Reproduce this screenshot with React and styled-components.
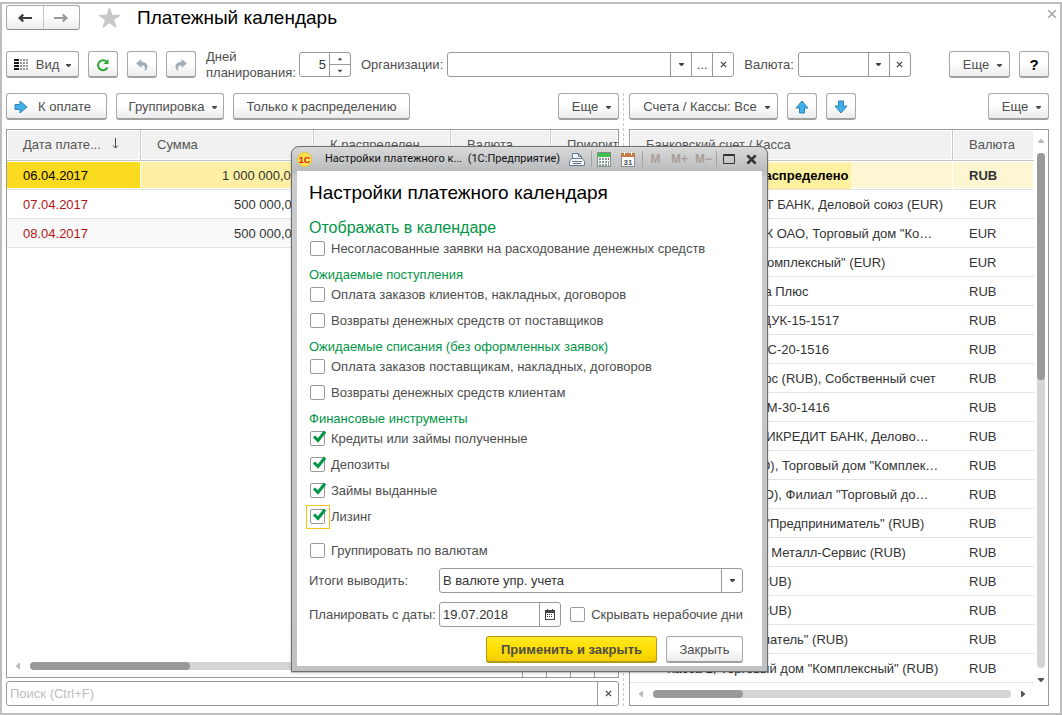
import React, { useState } from "react"
import styled, { createGlobalStyle, css } from "styled-components"
import { IoStar } from "react-icons/io5"

const GlobalStyle = createGlobalStyle`
  * { box-sizing: border-box; }
  body {
    margin: 0;
    background: #fff;
    color: #4d4d4d;
    font: 13px/16px "Liberation Sans", Arial, sans-serif;
  }
  button, input, select { font: inherit; color: inherit; }
`

const Page = styled.div`
  padding-top: 2px;
  min-height: 100vh;
  display: flex;
`

const Frame = styled.main`
  position: relative;
  flex: 1;
  min-width: 0;
  display: flex;
  flex-direction: column;
  padding: 1px 11px 7px 4px;
  border: 2px solid #bebebe;
`

const Header = styled.header`
  display: flex;
  align-items: center;
  height: 25px;
  margin-bottom: 21px;
`

const NavButtons = styled.div`
  display: flex;
  width: 74px;
  height: 25px;
  border: 1px solid #a8a8a8;
  border-bottom-color: #8c8c8c;
  border-radius: 3px;
  background: linear-gradient(#fff 40%, #ececec);
`

const NavButton = styled.button`
  flex: 1;
  display: flex;
  align-items: center;
  justify-content: center;
  padding: 0;
  border: 0;
  background: none;
  color: ${(p) => (p.$dim ? "#9a9a9a" : "#3c3c3c")};

  & + & { border-left: 1px solid #c4c4c4; }
`

const Star = styled(IoStar)`
  margin: 0 16px 0 18px;
  color: #c8c8c8;
`

const PageTitle = styled.h1`
  flex: 1;
  margin: 0;
  color: #000;
  font-size: 19px;
  line-height: 22px;
  font-weight: normal;
`

const ClosePage = styled.button`
  position: absolute;
  top: 4px;
  right: 2px;
  width: 12px;
  height: 12px;
  padding: 0;
  display: flex;
  align-items: center;
  justify-content: center;
  border: 0;
  background: none;
  color: #9a9a9a;
`

const Toolbar = styled.div`
  display: flex;
  align-items: center;
  gap: 9px;
  height: 27px;
  margin-bottom: ${(p) => p.$after || 0}px;
`

const Spacer = styled.span`
  flex: 1;
`

const Button = styled.button`
  flex: none;
  display: flex;
  align-items: center;
  justify-content: center;
  gap: 7px;
  width: ${(p) => (p.$width ? p.$width + "px" : "auto")};
  height: 27px;
  padding: 2px 0 0;
  white-space: nowrap;
  border: 1px solid #a8a8a8;
  border-bottom: 2px solid #a0a0a0;
  border-radius: 3px;
  background: linear-gradient(#fff 45%, #ececec);

  ${(p) =>
    p.$primary &&
    css`
      border-color: #b59b12;
      background: linear-gradient(#ffe924, #ffdf00 50%, #f0ce00);
      font-weight: bold;
    `}
`

const IconTextButton = styled(Button)`
  justify-content: flex-start;
  gap: 10px;
  padding-left: 7px;
`

const MenuButton = styled(Button)`
  gap: 8px;
  padding-left: 6px;
`

const HelpButton = styled(Button)`
  color: #000;
  font-size: 15px;
  font-weight: bold;
`

const FieldGroup = styled.div`
  display: flex;
  align-items: center;
  gap: 4px;
  min-width: 0;
  margin-left: 1px;
`

const FieldLabel = styled.label`
  flex: none;
  width: ${(p) => (p.$width ? p.$width + "px" : "auto")};
`

const Field = styled.div`
  display: flex;
  flex: ${(p) => (p.$width ? "0 1 auto" : "1")};
  width: ${(p) => (p.$width ? p.$width + "px" : "auto")};
  min-width: 0;
  height: 25px;
  border: 1px solid #999;
  border-radius: 3px;
  background: #fff;
  color: #333;
`

const fieldText = css`
  flex: 1;
  width: 0;
  min-width: 0;
  padding: 0 3px;
  border: 0;
  outline: 0;
  background: none;
`

const TextInput = styled.input`
  ${fieldText}
  text-align: ${(p) => (p.$right ? "right" : "left")};

  &::placeholder { color: #bdbdbd; opacity: 1; }
`

const Select = styled.select`
  ${fieldText}
  appearance: none;
`

const FieldButton = styled.button`
  flex: none;
  display: flex;
  align-items: center;
  justify-content: center;
  width: 21px;
  padding: 0;
  border: 0;
  border-left: 1px solid #999;
  background: none;
  color: #444;
`

const Stepper = styled.div`
  width: 21px;
  display: flex;
  flex-direction: column;
  border-left: 1px solid #999;

  button {
    flex: 1;
    display: flex;
    align-items: center;
    justify-content: center;
    padding: 0;
    border: 0;
    background: none;
  }
  button + button { border-top: 1px solid #999; }
`

const Panes = styled.div`
  flex: 1;
  display: grid;
  grid-template-columns: minmax(0, 613fr) 10px minmax(0, 420fr);
`

const Pane = styled.section`
  display: flex;
  flex-direction: column;
  min-width: 0;
`

const Divider = styled.div`
  width: 2px;
  justify-self: center;
  border-left: 1px dashed #ccc;
`

const TableBox = styled.div`
  flex: 1;
  display: flex;
  flex-direction: column;
  border: 1px solid #999;
`

const TableArea = styled.div`
  flex: 1;
  display: flex;
`

const Table = styled.table`
  flex: 1;
  align-self: flex-start;
  width: 100%;
  min-width: 0;
  table-layout: fixed;
  border-collapse: separate;
  border-spacing: 0;
  color: #333;
`

const Th = styled.th`
  width: ${(p) => (p.$width ? p.$width + "px" : "auto")};
  height: 31px;
  padding: 0 0 0 16px;
  overflow: hidden;
  white-space: nowrap;
  text-align: left;
  font-weight: normal;
  color: #555;
  background: #f1f1f1;
  border-right: 1px solid #c6c6c6;
  border-bottom: 1px solid #c6c6c6;
  box-shadow: inset 0 0 0 1px #fff;

  &:last-child { border-right: 0; }
  svg { margin-left: 8px; }
`

const Td = styled.td`
  height: 29px;
  padding: 2px ${(p) => (p.$right ? 15 : 0)}px 0 ${(p) => p.$indent || 16}px;
  overflow: hidden;
  white-space: nowrap;
  text-align: ${(p) => (p.$right ? "right" : "left")};
  color: ${(p) => p.$color || "inherit"};
  font-weight: ${(p) => (p.$bold ? "bold" : "normal")};
  background: ${(p) => p.$bg || "none"};
  border-bottom: 1px solid #e3e3e3;

  ${(p) =>
    p.$selected &&
    css`
      border-right: 1px solid #fff;
      box-shadow: inset 0 1px #fff, inset 0 -1px #fff;
    `}
`

const Mark = styled.span`
  display: inline-block;
  padding: 5px 3px;
  margin-left: -3px;
  color: #000;
  background: #fdf09f;
`

const VScroll = styled.div`
  flex: none;
  width: 14px;
  display: flex;
  flex-direction: column;
  align-items: center;
  gap: 9px;
  padding: 8px 0 0;
`

const VTrack = styled.div`
  flex: 1;
  width: 8px;
  border-radius: 4px;
  background: #d5d5d5;
`

const VThumb = styled.div`
  height: 44%;
  border-radius: 4px;
  background: #999;
`

const HScroll = styled.div`
  flex: 1;
  display: flex;
  align-items: center;
  gap: 9px;
  padding: 0 ${(p) => (p.$wide ? 22 : 8)}px 0 8px;
`

const HTrack = styled.div`
  flex: 1;
  height: 8px;
  border-radius: 4px;
  background: #d5d5d5;
`

const HThumb = styled.div`
  width: ${(p) => p.$size};
  height: 8px;
  border-radius: 4px;
  background: #999;
`

const BottomBar = styled.div`
  display: flex;
  height: 22px;
`

const PagerButton = styled.button`
  width: 24px;
  padding: 0;
  border: 0;
  border-left: 1px solid #999;
  background: none;
`

const SearchField = styled(Field)`
  flex: none;
  margin-top: 3px;
`

const Dialog = styled.section`
  position: absolute;
  left: 289px;
  top: 142px;
  width: 477px;
  padding: 0 5px 5px;
  border: 1px solid #6e6e6e;
  border-radius: 8px 8px 0 0;
  background: linear-gradient(#d9d9d9, #b9bbbd 24px, #c9cbcd 30px, #bfc1c3);
  box-shadow: 0 1px 2px rgba(0, 0, 0, 0.3);
`

const DialogBar = styled.header`
  display: flex;
  align-items: center;
  height: 24px;
  color: #111;
  font: 11px/16px Roboto, "Noto Sans", sans-serif;
`

const DialogCaption = styled.span`
  flex: 1;
  padding-left: 13px;
  white-space: pre;
`

const BarButton = styled.button`
  display: flex;
  align-items: center;
  justify-content: center;
  width: ${(p) => p.$width}px;
  height: 18px;
  padding: 0;
  border: 0;
  background: none;
  color: ${(p) => p.$color || "#333"};
  font: bold 12px/16px "Liberation Sans", Arial, sans-serif;
`

const BarLine = styled.span`
  width: 1px;
  height: 16px;
  margin-left: ${(p) => p.$gap || 0}px;
  background: #a2a4a6;
`

const DialogBody = styled.div`
  padding: 12px 19px 3px 12px;
  background: #fff;
`

const DialogTitle = styled.h2`
  margin: 0 0 15px;
  color: #000;
  font-size: 19px;
  line-height: 20px;
  font-weight: normal;
`

const SectionTitle = styled.h3`
  margin: 0 0 3px;
  color: #009646;
  font-size: 16px;
  line-height: 20px;
  font-weight: normal;
`

const Group = styled.fieldset`
  display: flex;
  flex-direction: column;
  gap: 10px;
  margin: 0 0 10px;
  padding: 0;
  border: 0;
`

const GroupTitle = styled.legend`
  padding: 0 0 4px;
  color: #009646;
`

const CheckLabel = styled.label`
  display: flex;
  align-items: center;
  gap: 5px;
  padding-left: 1px;
  white-space: nowrap;
`

const CheckBox = styled.span`
  position: relative;
  display: block;
  width: 16px;
  height: 16px;
  outline: ${(p) => (p.$focused ? "1px solid #f5c518" : "none")};
  outline-offset: 3px;

  input {
    appearance: none;
    display: block;
    width: 15px;
    height: 15px;
    margin: 0;
    border: 1px solid #999;
    border-radius: 2px;
    background: #fff;
  }
  svg {
    position: absolute;
    left: 2px;
    top: -1px;
    pointer-events: none;
  }
`

const FormRow = styled.div`
  display: flex;
  align-items: center;
  margin-top: ${(p) => p.$top || 9}px;
`

const FormLabel = styled.label`
  flex: none;
  width: 130px;
  white-space: nowrap;
`

const Actions = styled.div`
  display: flex;
  justify-content: flex-end;
  gap: 9px;
  margin-top: 9px;
`

const Caret = () => (
  <svg width="5" height="5" viewBox="0 0 5 5" fill="currentColor">
    <path d="M0 1h5v1L3 4H2L0 2z" />
  </svg>
)

const Cross = ({ size = 7, stroke = 1.4 }) => (
  <svg width={size} height={size} viewBox="0 0 8 8" stroke="currentColor" strokeWidth={stroke} fill="none">
    <path d="M1 1l6 6M7 1L1 7" />
  </svg>
)

const Arrow = ({ flip }) => (
  <svg width="14" height="10" viewBox="0 0 14 10" fill="currentColor">
    <path
      d="M0 5L4.500 0.800 6 2.200 4.500 4H14v2H4.500L6 7.800 4.500 9.200z"
      transform={flip ? "matrix(-1 0 0 1 14 0)" : undefined}
    />
  </svg>
)

const BlueArrow = ({ turn = 0 }) => (
  <svg width="14" height="14" viewBox="0 0 14 14">
    <path
      d="M1 4.500h5V1L13 7l-7 6V9.500H1z"
      transform={`rotate(${turn} 7 7)`}
      fill="#41b0ea"
      stroke="#2d83b4"
      strokeLinejoin="round"
    />
  </svg>
)

const ListIcon = () => (
  <svg width="15" height="12" viewBox="0 0 15 12">
    {[0, 3, 6, 9].map((y) => (
      <g key={y}>
        <rect x="0" y={y} width="5" height="2" fill="#111" />
        {[6, 9, 12].map((x) => (
          <rect key={x} x={x} y={y} width="2" height="2" fill="#999" />
        ))}
      </g>
    ))}
  </svg>
)

const RefreshIcon = () => (
  <svg width="14" height="14" viewBox="0 0 14 14" fill="none" stroke="#2ea836" strokeWidth="2">
    <path d="M11.500 9.500A5 5 0 1 1 10.500 3.500" />
    <path d="M12.500 1v5h-5z" fill="#2ea836" stroke="none" />
  </svg>
)

const UndoIcon = ({ flip }) => (
  <svg width="14" height="14" viewBox="0 0 14 14" fill="#a3adb5">
    <path
      d="M1 5.500L6.500 1v3C10.500 4 12.500 6 12.500 8.500c0 2-1 3.500-3.500 4.500 1-1.500 1.200-2.500.8-3.700C9.300 7.900 8.300 7.500 6.500 7.500V10z"
      transform={flip ? "matrix(-1 0 0 1 14 0)" : undefined}
    />
  </svg>
)

const SortIcon = () => (
  <svg width="8" height="11" viewBox="0 0 8 11" fill="none" stroke="#444" strokeWidth="1">
    <path d="M3.500 0v10M1 7.500L3.500 10 6 7.500" />
  </svg>
)

const Tip = ({ turn = 0, dim, size = 6 }) => (
  <svg width={size} height={size} viewBox="0 0 6 6" fill={dim ? "#bbb" : "#555"}>
    <path d="M0 1h6v1L3.500 5h-1L0 2z" transform={`rotate(${turn} 3 3)`} />
  </svg>
)

const CheckMark = () => (
  <svg width="16" height="14" viewBox="0 0 16 14" fill="none" stroke="#009646" strokeWidth="3">
    <path d="M2 6.500l4 4L13 1.500" />
  </svg>
)

const CalendarIcon = () => (
  <svg width="10" height="11" viewBox="0 0 10 11" fill="#444">
    <path d="M0 1h10v10H0zM1 4v6h8V4z" fillRule="evenodd" />
    <path d="M2 0h1v2H2zM7 0h1v2H7z" />
    {[5, 7].map((y) => [2, 4, 6].map((x) => <rect key={x + "-" + y} x={x} y={y} width="1" height="1" />))}
  </svg>
)

const Logo = () => (
  <svg width="15" height="15" viewBox="0 0 15 15">
    <circle cx="7.500" cy="7.500" r="7" fill="#fce14a" stroke="#e6c43a" />
    <text x="7.500" y="10.500" fontSize="9" fontWeight="bold" fill="#d8151c" textAnchor="middle" fontFamily="Liberation Sans">1C</text>
  </svg>
)

const PrinterIcon = () => (
  <svg width="16" height="15" viewBox="0 0 16 15" fill="#f4f7fa" stroke="#66788a">
    <path d="M3.500 7V1.500h6l3 3V7" />
    <path d="M9.500 1.500v3h3" fill="none" />
    <path d="M2.500 6.500h11l2 3v4h-15v-4z" />
    <path d="M3 9.500h10M4 11.500h8" />
  </svg>
)

const CalcIcon = () => (
  <svg width="14" height="15" viewBox="0 0 14 15">
    <rect x="0.500" y="0.500" width="13" height="14" fill="#f6f8f6" stroke="#7f8f86" />
    <rect x="1" y="1" width="12" height="4" fill="#3fc04c" />
    {[6, 9, 12].map((y) =>
      [2, 5, 8].map((x) => <rect key={x + "-" + y} x={x} y={y} width="2" height="2" fill="#8a979f" />)
    )}
    <path d="M11 6h1v2h-1z" fill="#e03a3a" />
    <path d="M11 9h1v5h-1z" fill="#8a979f" />
  </svg>
)

const DayIcon = () => (
  <svg width="14" height="15" viewBox="0 0 14 15">
    <rect x="0.500" y="1.500" width="13" height="13" fill="#fdfdfd" stroke="#8c8c94" />
    <rect x="0" y="1" width="14" height="4" fill="#c77a43" />
    <path d="M3 0h1v3H3zM10 0h1v3h-1z" fill="#fff" />
    <text x="7" y="13" fontSize="8" fontWeight="bold" fill="#4a5560" textAnchor="middle" fontFamily="Liberation Sans">31</text>
  </svg>
)

const MaxIcon = () => (
  <svg width="12" height="10" viewBox="0 0 12 10" fill="none" stroke="#333">
    <path d="M0.500 0.500h11v9H0.500zM0 1.500h12" />
  </svg>
)

const payments = [
  { date: "06.04.2017", sum: "1 000 000,00" },
  { date: "07.04.2017", sum: "500 000,00" },
  { date: "08.04.2017", sum: "500 000,00" },
]

const accounts = [
  ["АО МЕЖИНВЕСТ БАНК, Деловой союз (EUR)", "EUR"],
  ['УРАЛПРОМБАНК ОАО, Торговый дом "Ко…', "EUR"],
  ['Касса 1, EUR, "Комплексный" (EUR)', "EUR"],
  ["ООО Библиотека Плюс", "RUB"],
  ["Договор № 115-ДУК-15-1517", "RUB"],
  ["Договор № АММС-20-1516", "RUB"],
  ["Сбербанк - ресурс (RUB), Собственный счет", "RUB"],
  ["Договор № ОПОМ-30-1416", "RUB"],
  ["Р/с 4070281 ЮНИКРЕДИТ БАНК, Делово…", "RUB"],
  ['Газпромбанк (АО), Торговый дом "Комплек…', "RUB"],
  ['Газпромбанк, (АО), Филиал "Торговый до…', "RUB"],
  ['Касса 12, отдел "Предприниматель" (RUB)', "RUB"],
  ["Касса 1, филиал Металл-Сервис (RUB)", "RUB"],
  ["Касса 1, офис (RUB)", "RUB"],
  ["Касса 3, офис (RUB)", "RUB"],
  ['ИП "Предприниматель" (RUB)', "RUB"],
  ['Касса 2, Торговый дом "Комплексный" (RUB)', "RUB"],
]

const Check = ({ label, checked = false, focused }) => {
  const [on, setOn] = useState(checked)
  return (
    <CheckLabel>
      <CheckBox $focused={focused}>
        <input type="checkbox" checked={on} onChange={() => setOn(!on)} />
        {on && <CheckMark />}
      </CheckBox>
      {label}
    </CheckLabel>
  )
}

const PaymentsPane = () => (
  <Pane>
    <Toolbar $after={9}>
      <IconTextButton $width={101}><BlueArrow />К оплате</IconTextButton>
      <MenuButton $width={108}>Группировка <Caret /></MenuButton>
      <Button $width={177}>Только к распределению</Button>
      <Spacer />
      <MenuButton $width={61}>Еще <Caret /></MenuButton>
    </Toolbar>
    <TableBox>
      <TableArea>
        <Table>
          <thead>
            <tr>
              <Th $width={134}>Дата плате... <SortIcon /></Th>
              <Th $width={173}>Сумма</Th>
              <Th $width={137}>К распределен</Th>
              <Th $width={100}>Валюта</Th>
              <Th>Приорите</Th>
            </tr>
          </thead>
          <tbody>
            {payments.map((p, i) => {
              const selected = i === 0
              const bg = selected ? "#fdf0a4" : i % 2 ? "none" : "#f9f9f9"
              return (
                <tr key={p.date}>
                  <Td $selected={selected} $bg={selected ? "#fbdb1f" : bg} $color={selected ? "#000" : "#b01818"}>{p.date}</Td>
                  <Td $selected={selected} $bg={bg} $right>{p.sum}</Td>
                  <Td $selected={selected} $bg={bg} />
                  <Td $selected={selected} $bg={bg} />
                  <Td $selected={selected} $bg={bg} />
                </tr>
              )
            })}
          </tbody>
        </Table>
      </TableArea>
      <BottomBar>
        <HScroll>
          <Tip turn={90} dim />
          <HTrack><HThumb $size="33%" /></HTrack>
        </HScroll>
        <PagerButton aria-label="В начало" />
        <PagerButton aria-label="Вверх" />
        <PagerButton aria-label="Вниз" />
        <PagerButton aria-label="В конец" />
      </BottomBar>
    </TableBox>
    <SearchField>
      <TextInput aria-label="Поиск" placeholder="Поиск (Ctrl+F)" />
      <FieldButton aria-label="Очистить"><Cross /></FieldButton>
    </SearchField>
  </Pane>
)

const AccountsPane = () => (
  <Pane>
    <Toolbar $after={9}>
      <MenuButton $width={149}>Счета / Кассы: Все <Caret /></MenuButton>
      <Button $width={30} aria-label="Вверх"><BlueArrow turn={-90} /></Button>
      <Button $width={30} aria-label="Вниз"><BlueArrow turn={90} /></Button>
      <Spacer />
      <MenuButton $width={61}>Еще <Caret /></MenuButton>
    </Toolbar>
    <TableBox>
      <TableArea>
        <Table>
          <thead>
            <tr>
              <Th>Банковский счет / Касса</Th>
              <Th $width={81}>Валюта</Th>
            </tr>
          </thead>
          <tbody>
            <tr>
              <Td $selected $bold $bg="#fdf6d2"><Mark>Поступившие не распределено</Mark></Td>
              <Td $selected $bold $bg="#fdf6d2">RUB</Td>
            </tr>
            {accounts.map(([name, currency]) => (
              <tr key={name}>
                <Td $indent={37}>{name}</Td>
                <Td>{currency}</Td>
              </tr>
            ))}
          </tbody>
        </Table>
        <VScroll>
          <Tip turn={180} dim />
          <VTrack><VThumb /></VTrack>
          <Tip />
        </VScroll>
      </TableArea>
      <BottomBar>
        <HScroll $wide>
          <Tip turn={90} dim />
          <HTrack><HThumb $size="25%" /></HTrack>
          <Tip turn={-90} />
        </HScroll>
      </BottomBar>
    </TableBox>
  </Pane>
)

const SettingsDialog = () => (
  <Dialog role="dialog" aria-labelledby="settings-title">
    <DialogBar>
      <Logo />
      <DialogCaption>Настройки платежного к...  (1С:Предприятие)</DialogCaption>
      <BarButton $width={28} aria-label="Печать"><PrinterIcon /></BarButton>
      <BarLine />
      <BarButton $width={24} aria-label="Калькулятор"><CalcIcon /></BarButton>
      <BarButton $width={24} aria-label="Календарь"><DayIcon /></BarButton>
      <BarLine $gap={2} />
      <BarButton $width={25} $color="#ab9f97">M</BarButton>
      <BarButton $width={23} $color="#ab9f97">M+</BarButton>
      <BarButton $width={25} $color="#ab9f97">M−</BarButton>
      <BarLine />
      <BarButton $width={24} aria-label="Развернуть"><MaxIcon /></BarButton>
      <BarButton $width={21} aria-label="Закрыть окно"><Cross size={11} stroke={2} /></BarButton>
    </DialogBar>
    <DialogBody>
      <DialogTitle id="settings-title">Настройки платежного календаря</DialogTitle>
      <SectionTitle>Отображать в календаре</SectionTitle>
      <Group>
        <Check label="Несогласованные заявки на расходование денежных средств" />
      </Group>
      <Group>
        <GroupTitle>Ожидаемые поступления</GroupTitle>
        <Check label="Оплата заказов клиентов, накладных, договоров" />
        <Check label="Возвраты денежных средств от поставщиков" />
      </Group>
      <Group>
        <GroupTitle>Ожидаемые списания (без оформленных заявок)</GroupTitle>
        <Check label="Оплата заказов поставщикам, накладных, договоров" />
        <Check label="Возвраты денежных средств клиентам" />
      </Group>
      <Group>
        <GroupTitle>Финансовые инструменты</GroupTitle>
        <Check label="Кредиты или займы полученные" checked />
        <Check label="Депозиты" checked />
        <Check label="Займы выданные" checked />
        <Check label="Лизинг" checked focused />
      </Group>
      <FormRow $top={18}>
        <Check label="Группировать по валютам" />
      </FormRow>
      <FormRow>
        <FormLabel htmlFor="totals">Итоги выводить:</FormLabel>
        <Field>
          <Select id="totals" defaultValue="upr">
            <option value="upr">В валюте упр. учета</option>
          </Select>
          <FieldButton tabIndex={-1} aria-label="Выбрать"><Caret /></FieldButton>
        </Field>
      </FormRow>
      <FormRow>
        <FormLabel htmlFor="start">Планировать с даты:</FormLabel>
        <Field $width={122}>
          <TextInput id="start" defaultValue="19.07.2018" />
          <FieldButton aria-label="Выбрать дату"><CalendarIcon /></FieldButton>
        </Field>
        <Spacer />
        <Check label="Скрывать нерабочие дни" />
      </FormRow>
      <Actions>
        <Button $width={171} $primary>Применить и закрыть</Button>
        <Button $width={77}>Закрыть</Button>
      </Actions>
    </DialogBody>
  </Dialog>
)

const App = () => (
  <Page>
    <GlobalStyle />
    <Frame>
      <Header>
        <NavButtons>
          <NavButton aria-label="Назад"><Arrow /></NavButton>
          <NavButton $dim aria-label="Вперед"><Arrow flip /></NavButton>
        </NavButtons>
        <Star size={23} />
        <PageTitle>Платежный календарь</PageTitle>
        <ClosePage aria-label="Закрыть"><Cross size={10} stroke={1} /></ClosePage>
      </Header>
      <Toolbar $after={15}>
        <Button $width={73}><ListIcon />Вид <Caret /></Button>
        <Button $width={30} aria-label="Обновить"><RefreshIcon /></Button>
        <Button $width={30} aria-label="Отменить"><UndoIcon /></Button>
        <Button $width={30} aria-label="Повторить"><UndoIcon flip /></Button>
        <FieldGroup>
          <FieldLabel htmlFor="days" $width={89}>Дней планирования:</FieldLabel>
          <Field $width={52}>
            <TextInput id="days" defaultValue="5" $right />
            <Stepper>
              <button aria-label="Больше"><Tip turn={180} size={4} /></button>
              <button aria-label="Меньше"><Tip size={4} /></button>
            </Stepper>
          </Field>
        </FieldGroup>
        <FieldGroup>
          <FieldLabel htmlFor="org">Организации:</FieldLabel>
          <Field $width={287}>
            <TextInput id="org" />
            <FieldButton aria-label="Выбрать"><Caret /></FieldButton>
            <FieldButton aria-label="Показать все">...</FieldButton>
            <FieldButton aria-label="Очистить"><Cross /></FieldButton>
          </Field>
        </FieldGroup>
        <FieldGroup>
          <FieldLabel htmlFor="currency">Валюта:</FieldLabel>
          <Field $width={113}>
            <TextInput id="currency" />
            <FieldButton aria-label="Выбрать"><Caret /></FieldButton>
            <FieldButton aria-label="Очистить"><Cross /></FieldButton>
          </Field>
        </FieldGroup>
        <Spacer />
        <MenuButton $width={61}>Еще <Caret /></MenuButton>
        <HelpButton $width={30}>?</HelpButton>
      </Toolbar>
      <Panes>
        <PaymentsPane />
        <Divider />
        <AccountsPane />
      </Panes>
      <SettingsDialog />
    </Frame>
  </Page>
)

export default App
